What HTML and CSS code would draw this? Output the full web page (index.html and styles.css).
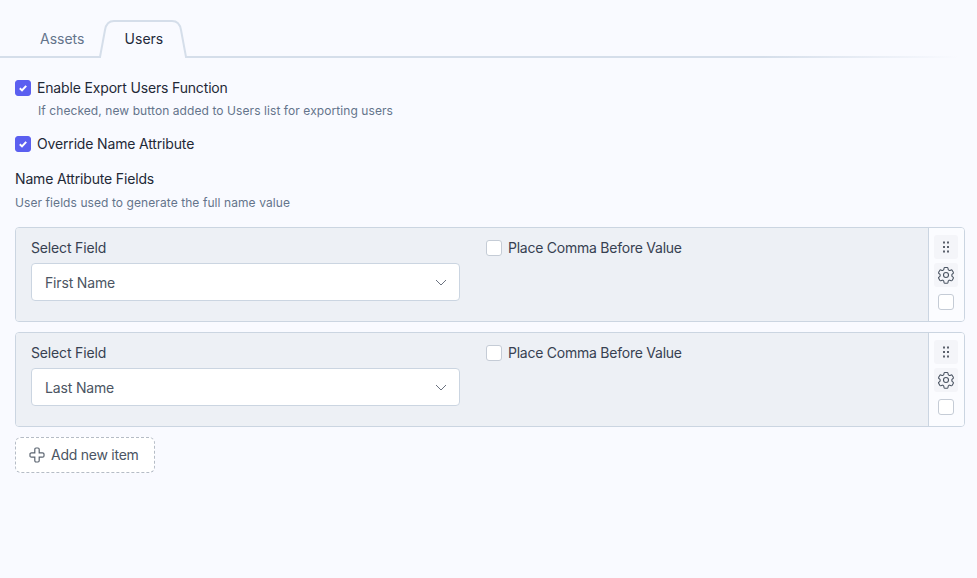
FILE: index.html
```html
<!DOCTYPE html>
<html lang="en">
<head>
    <meta charset="UTF-8">
    <title>Users settings</title>
    <link rel="stylesheet" href="styles.css">
</head>
<body>
    <div class="tabs">
        <div class="tab">Assets</div>
        <div class="tab tab-active">
            <svg class="tab-shape" width="90" height="39" viewBox="0 0 90 39">
                <path d="M2 39 L7 10 Q8.500 1 16 1 H74 Q81.500 1 83 10 L88 39 Z" fill="#f9faff"/>
                <path d="M0 37 H2 L7 10 Q8.500 1 16 1 H74 Q81.500 1 83 10 L88 37 H90" fill="none" stroke="#d5deea" stroke-width="2"/>
            </svg>
            <span class="tab-label">Users</span>
        </div>
    </div>

    <div class="content">
        <label class="check-line">
            <span class="box box-on"><svg width="12" height="12" viewBox="0 0 12 12"><path d="M2.800 6.300 L5 8.400 L9.200 3.800" fill="none" stroke="#fff" stroke-width="2"/></svg></span>
            Enable Export Users Function
        </label>
        <p class="hint hint-indent">If checked, new button added to Users list for exporting users</p>

        <label class="check-line check-second">
            <span class="box box-on"><svg width="12" height="12" viewBox="0 0 12 12"><path d="M2.800 6.300 L5 8.400 L9.200 3.800" fill="none" stroke="#fff" stroke-width="2"/></svg></span>
            Override Name Attribute
        </label>

        <div class="field-title">Name Attribute Fields</div>
        <p class="hint">User fields used to generate the full name value</p>

        <div class="row">
            <div class="row-body">
                <div class="col">
                    <div class="col-label">Select Field</div>
                    <div class="select">First Name
                        <svg width="12" height="8" viewBox="0 0 12 8"><path d="M1 1 L6 6 L11 1" fill="none" stroke="#6b7280" stroke-width="1"/></svg>
                    </div>
                </div>
                <label class="check-line col-check"><span class="box"></span>Place Comma Before Value</label>
            </div>
            <div class="row-side">
                <span class="side-btn"><svg width="8" height="12" viewBox="0 0 8 12" fill="#5b616c"><rect x="1" y="0.500" width="2" height="2"/><rect x="5" y="0.500" width="2" height="2"/><rect x="1" y="5" width="2" height="2"/><rect x="5" y="5" width="2" height="2"/><rect x="1" y="9.500" width="2" height="2"/><rect x="5" y="9.500" width="2" height="2"/></svg></span>
                <span class="side-btn"><svg width="20" height="20" viewBox="0 0 24 24" fill="none" stroke="#4b5563" stroke-width="1.300"><path d="M9.600 3.900c.1-.5.6-.9 1.100-.9h2.600c.5 0 1 .4 1.100.9l.2 1.300c.1.4.3.7.7.9l.5.3c.3.2.7.3 1.100.1l1.200-.5c.5-.2 1.100 0 1.400.5l1.300 2.300c.3.5.2 1.100-.3 1.400l-1 .8c-.3.3-.5.7-.5 1.100v.6c0 .4.2.8.5 1.100l1 .8c.4.3.5.9.3 1.400l-1.300 2.300c-.3.5-.9.7-1.400.5l-1.200-.5c-.4-.2-.8-.1-1.100.1l-.5.3c-.4.2-.6.5-.7.9l-.2 1.300c-.1.5-.6.9-1.100.9h-2.600c-.5 0-1-.4-1.100-.9l-.2-1.300c-.1-.4-.3-.7-.7-.9l-.5-.3c-.3-.2-.7-.3-1.100-.1l-1.200.5c-.5.2-1.100 0-1.400-.5l-1.300-2.300c-.3-.5-.2-1.100.3-1.400l1-.8c.3-.3.5-.7.5-1.100v-.6c0-.4-.2-.8-.5-1.100l-1-.8c-.4-.3-.5-.9-.3-1.400l1.300-2.300c.3-.5.9-.7 1.400-.5l1.200.5c.4.2.8.1 1.100-.1l.5-.3c.4-.2.6-.5.7-.9z"/><circle cx="12" cy="12" r="3"/></svg></span>
                <span class="box side-box"></span>
            </div>
        </div>

        <div class="row">
            <div class="row-body">
                <div class="col">
                    <div class="col-label">Select Field</div>
                    <div class="select">Last Name
                        <svg width="12" height="8" viewBox="0 0 12 8"><path d="M1 1 L6 6 L11 1" fill="none" stroke="#6b7280" stroke-width="1"/></svg>
                    </div>
                </div>
                <label class="check-line col-check"><span class="box"></span>Place Comma Before Value</label>
            </div>
            <div class="row-side">
                <span class="side-btn"><svg width="8" height="12" viewBox="0 0 8 12" fill="#5b616c"><rect x="1" y="0.500" width="2" height="2"/><rect x="5" y="0.500" width="2" height="2"/><rect x="1" y="5" width="2" height="2"/><rect x="5" y="5" width="2" height="2"/><rect x="1" y="9.500" width="2" height="2"/><rect x="5" y="9.500" width="2" height="2"/></svg></span>
                <span class="side-btn"><svg width="20" height="20" viewBox="0 0 24 24" fill="none" stroke="#4b5563" stroke-width="1.300"><path d="M9.600 3.900c.1-.5.6-.9 1.100-.9h2.600c.5 0 1 .4 1.100.9l.2 1.300c.1.4.3.7.7.9l.5.3c.3.2.7.3 1.100.1l1.200-.5c.5-.2 1.100 0 1.400.5l1.300 2.300c.3.5.2 1.100-.3 1.400l-1 .8c-.3.3-.5.7-.5 1.100v.6c0 .4.2.8.5 1.100l1 .8c.4.3.5.9.3 1.400l-1.300 2.300c-.3.5-.9.7-1.400.5l-1.200-.5c-.4-.2-.8-.1-1.100.1l-.5.3c-.4.2-.6.5-.7.9l-.2 1.300c-.1.5-.6.9-1.100.9h-2.600c-.5 0-1-.4-1.100-.9l-.2-1.300c-.1-.4-.3-.7-.7-.9l-.5-.3c-.3-.2-.7-.3-1.100-.1l-1.200.5c-.5.2-1.100 0-1.400-.5l-1.300-2.300c-.3-.5-.2-1.100.3-1.400l1-.8c.3-.3.5-.7.5-1.100v-.6c0-.4-.2-.8-.5-1.100l-1-.8c-.4-.3-.5-.9-.3-1.400l1.300-2.300c.3-.5.9-.7 1.400-.5l1.200.5c.4.2.8.1 1.100-.1l.5-.3c.4-.2.6-.5.7-.9z"/><circle cx="12" cy="12" r="3"/></svg></span>
                <span class="box side-box"></span>
            </div>
        </div>

        <div class="add-btn">
            <svg width="16" height="16" viewBox="0 0 16 16" fill="none" stroke="#5b6470" stroke-width="1.200"><path d="M5.800 2.500 C5.800 1.600 6.300 1 7 1 H9 C9.700 1 10.200 1.600 10.200 2.500 V5.800 H13.500 C14.400 5.800 15 6.300 15 7 V9 C15 9.700 14.400 10.200 13.500 10.200 H10.200 V13.500 C10.200 14.400 9.700 15 9 15 H7 C6.300 15 5.800 14.400 5.800 13.500 V10.200 H2.500 C1.600 10.200 1 9.700 1 9 V7 C1 6.300 1.600 5.800 2.500 5.800 H5.800 Z"/></svg>
            Add new item
        </div>
    </div>
</body>
</html>
```

FILE: styles.css
```css
html, body {
    height: 100%;
}
body {
    margin: 0;
    background-color: #f9faff;
    font-family: Inter, "Liberation Sans", sans-serif;
    font-size: 14px;
    line-height: 20px;
    letter-spacing: -0.16px;
    color: #1f2937;
    overflow: hidden;
}
.tabs {
    display: flex;
    height: 58px;
    padding: 20px 0 0 15px;
    box-sizing: border-box;
    border-bottom: 2px solid;
    border-image: linear-gradient(to right, #d5deea 78%, #f9faff 98%) 1;
    letter-spacing: 0;
}
.tab {
    position: relative;
    height: 37px;
    padding: 9px 25px 0;
    box-sizing: border-box;
    color: #64748b;
}
.tab-active {
    width: 86px;
    margin-left: -9px;
    padding: 9px 0 0 1px;
    text-align: center;
    color: #1e293b;
}
.tab-shape {
    position: absolute;
    left: -2px;
    top: 0;
}
.tab-label {
    position: relative;
}
.content {
    padding: 20px 12px 0 15px;
}
.check-line {
    display: flex;
    align-items: center;
    gap: 6px;
    height: 20px;
}
.check-second {
    margin-top: 14px;
}
.box {
    display: flex;
    align-items: center;
    justify-content: center;
    width: 16px;
    height: 16px;
    box-sizing: border-box;
    flex-shrink: 0;
    background-color: #fff;
    border: 1px solid #c5ccd6;
    border-radius: 3px;
}
.box-on {
    background-color: #5b5ff0;
    border-color: #5b5ff0;
}
.hint {
    margin: 0;
    font-size: 12px;
    line-height: 18px;
    letter-spacing: 0.08px;
    color: #64748b;
}
.hint-indent {
    margin: 4px 0 0 23px;
}
.field-title {
    margin-top: 15px;
}
.field-title + .hint {
    margin-top: 5px;
}
.row {
    display: flex;
    height: 95px;
    box-sizing: border-box;
    margin-top: 10px;
    border: 1px solid #cbd5e1;
    border-radius: 4px;
    overflow: hidden;
}
.field-title + .hint + .row {
    margin-top: 15px;
}
.row-body {
    display: flex;
    flex: 1;
    padding: 10px 15px;
    background-color: #edf0f5;
}
.col {
    width: 429px;
}
.col-label {
    color: #374151;
}
.select {
    display: flex;
    align-items: center;
    justify-content: space-between;
    height: 38px;
    box-sizing: border-box;
    margin-top: 5px;
    padding: 2px 12px 0 13px;
    background-color: #fff;
    border: 1px solid #cbd5e1;
    border-radius: 4px;
    color: #4b5563;
}
.col-check {
    margin-left: 26px;
    letter-spacing: -0.24px;
    color: #374151;
}
.row-side {
    display: flex;
    flex-direction: column;
    align-items: center;
    gap: 4px;
    width: 36px;
    padding: 7px 1px 0 0;
    box-sizing: border-box;
    background-color: #fbfcff;
    border-left: 1px solid #cbd5e1;
}
.side-btn {
    display: flex;
    align-items: center;
    justify-content: center;
    width: 24px;
    height: 24px;
    background-color: #f4f5f9;
    border-radius: 3px;
}
.side-box {
    margin-top: 3px;
}
.add-btn {
    display: flex;
    align-items: center;
    gap: 6px;
    width: 140px;
    height: 36px;
    box-sizing: border-box;
    margin-top: 10px;
    padding-left: 13px;
    letter-spacing: -0.25px;
    background-color: #fff;
    border: 1px dashed #b5bcc6;
    border-radius: 6px;
    color: #4b5563;
}
```
